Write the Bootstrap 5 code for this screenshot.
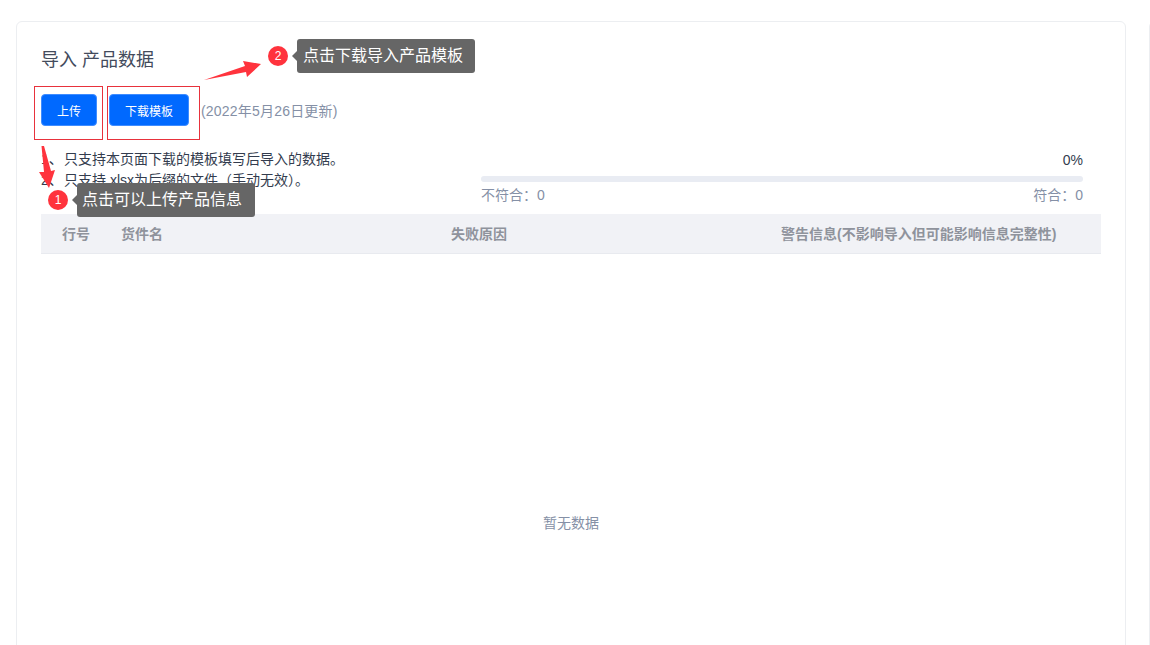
<!DOCTYPE html>
<html lang="zh-CN">
<head>
<meta charset="utf-8">
<title>导入 产品数据</title>
<link href="https://cdn.jsdelivr.net/npm/bootstrap@5.3.0/dist/css/bootstrap.min.css" rel="stylesheet">
<style>
html,body{height:645px;overflow:hidden;background:#fff}
body{font-family:"Liberation Sans","Noto Sans CJK SC",sans-serif;font-size:14px;color:#333c4e}
.page-wrap{gap:23px;padding:21px 0 0 16px;height:645px;width:1150px;overflow:hidden;position:relative}
.main-panel{flex:0 0 1110px;height:700px;border:1px solid #eceef1;border-radius:6px;padding:25px 24px 0}
.next-panel{flex:0 0 100px;height:700px;border:1px solid #eceef1;border-radius:6px}
.panel-title{font-size:18px;line-height:26px;margin:0 0 21px;font-weight:400;color:#434b5c}
.tool-row{height:32px;margin-bottom:24px}
.up-btn{height:32px;font-size:12px;line-height:30px;padding:2px 0 0;background:#0069ff;border:1px solid #3f8cff;border-radius:4px;color:#fff}
.b-one{width:56px;margin-right:12px}
.b-two{width:80px;margin-right:12px}
.update-note{color:#8590a6;letter-spacing:.2px;padding-top:2px}
.info-row{height:63px;margin-right:18px}
.rule-list{flex:0 0 440px;margin:-1px 0 0;padding:0;list-style:none;line-height:21px;font-size:14px;color:#333c4e}
.rule-list li{display:flex}
.rule-list i{font-style:normal;width:23px}
.stat-side{flex:1;min-width:0}
.pct{line-height:20px;text-align:right;height:26px}
.thin-progress{height:6px;background:#e9ecf3;border-radius:3px}
.stat-txt{color:#8590a6;line-height:20px;margin-top:3px}
.grid-head{height:40px;background:#f1f2f6;border-bottom:1px solid #e8eaef;font-size:14px;font-weight:700;color:#8f939c;line-height:41px;margin-top:1px}
.c1{flex:0 0 80px;padding-left:21px}
.c2{flex:0 0 330px}
.c3{flex:0 0 330px}
.empty-box{height:279px;display:flex;align-items:flex-end;justify-content:center;font-size:14px;color:#8590a6;line-height:20px}
.red-box{position:absolute;border:1px solid #e8323c;pointer-events:none}
.rb1{left:34px;top:86px;width:69px;height:54px}
.rb2{left:107px;top:86px;width:93px;height:54px}
.step-dot{position:absolute;width:20px;height:20px;border-radius:50%;background:#ff333d;color:#fff;font-size:12px;line-height:20px;text-align:center}
.sd1{left:48px;top:190px}
.sd2{left:268px;top:46px}
.step-tip{position:absolute;height:34px;background:#666;color:#fff;border-radius:3px;font-size:16px;line-height:33px;padding:0 5px;white-space:nowrap}
.step-tip::before{content:"";position:absolute;left:-5px;top:12px;border-style:solid;border-width:5px 5px 5px 0;border-color:transparent #666 transparent transparent}
.st1{left:77px;top:183px;width:178px}
.st2{left:297px;top:39px;width:178px;padding-left:6px}
.arrow-svg{position:absolute;left:0;top:0;pointer-events:none}
</style>
</head>
<body>
<div class="page-wrap d-flex align-items-start">
  <div class="main-panel bg-white">
    <h1 class="panel-title">导入 产品数据</h1>
    <div class="tool-row d-flex align-items-center">
      <button type="button" class="btn up-btn b-one">上传</button>
      <button type="button" class="btn up-btn b-two">下载模板</button>
      <span class="update-note">(2022年5月26日更新)</span>
    </div>
    <div class="info-row d-flex">
      <ul class="rule-list">
        <li><i>1、</i>只支持本页面下载的模板填写后导入的数据。</li>
        <li><i>2、</i>只支持.xlsx为后缀的文件（手动无效）。</li>
      </ul>
      <div class="stat-side">
        <div class="pct">0%</div>
        <div class="thin-progress"></div>
        <div class="stat-txt d-flex justify-content-between"><span>不符合：0</span><span>符合：0</span></div>
      </div>
    </div>
    <div class="grid-head d-flex">
      <div class="c1">行号</div>
      <div class="c2">货件名</div>
      <div class="c3">失败原因</div>
      <div>警告信息(不影响导入但可能影响信息完整性)</div>
    </div>
    <div class="empty-box"><span>暂无数据</span></div>
  </div>
  <div class="next-panel bg-white"></div>

  <div class="red-box rb1"></div>
  <div class="red-box rb2"></div>
  <svg class="arrow-svg" width="300" height="200" viewBox="0 0 300 200">
    <polygon points="41.500,146 44,146 51,171 55,170 49,188 39,172 44,172" fill="#ff333d"/>
    <polygon points="204,80 245,66 243,61 261,64 247,77 246,72" fill="#ff333d"/>
  </svg>
  <div class="step-dot sd1">1</div>
  <div class="step-tip st1">点击可以上传产品信息</div>
  <div class="step-dot sd2">2</div>
  <div class="step-tip st2">点击下载导入产品模板</div>
</div>
<script src="https://cdn.jsdelivr.net/npm/bootstrap@5.3.0/dist/js/bootstrap.bundle.min.js"></script>
</body>
</html>
